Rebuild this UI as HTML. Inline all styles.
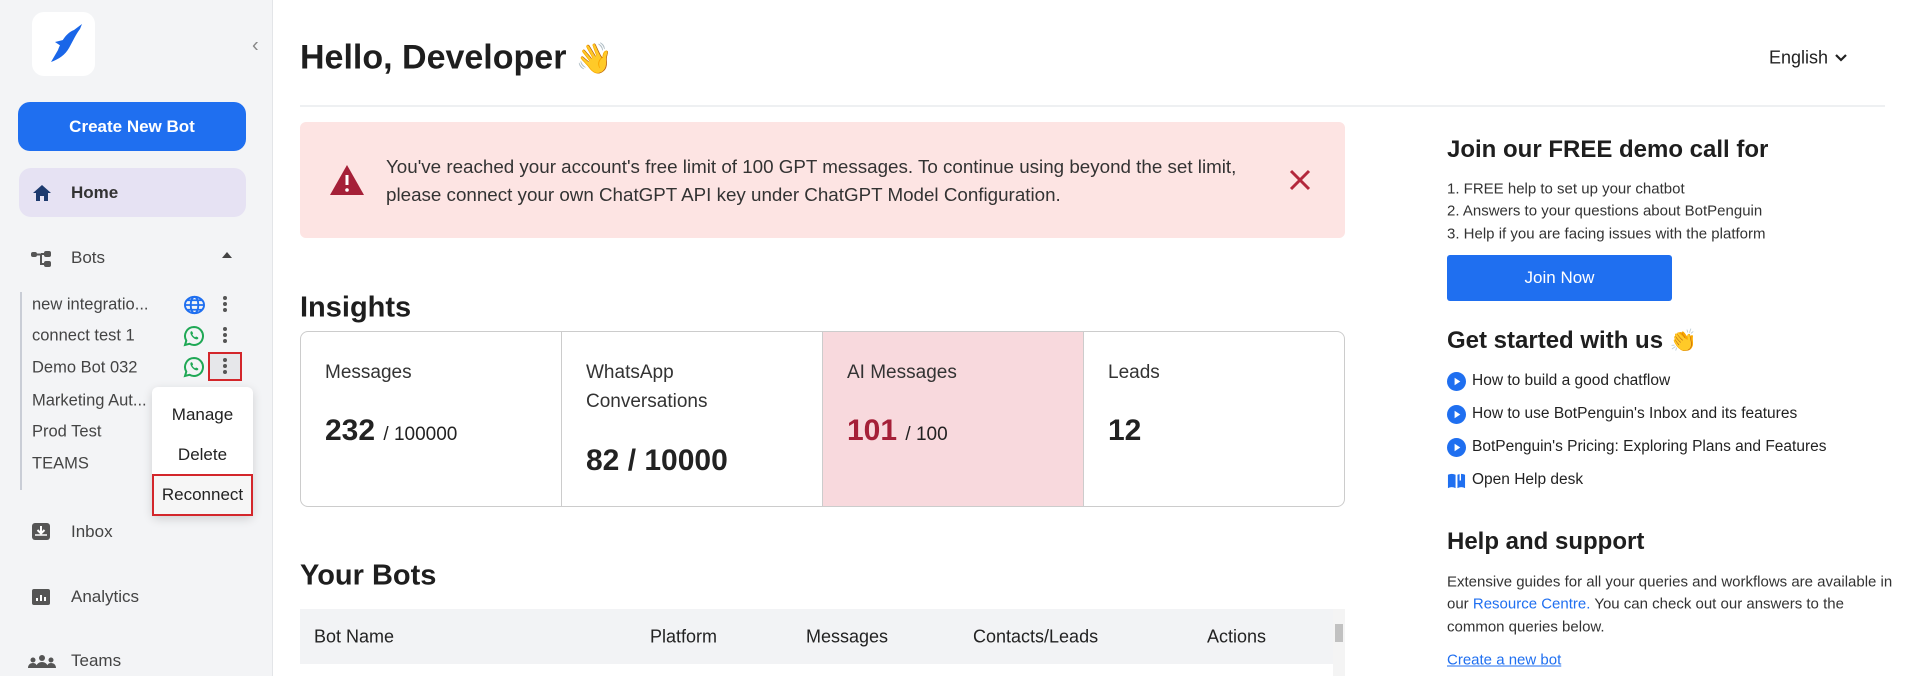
<!DOCTYPE html>
<html><head><meta charset="utf-8"><style>
*{box-sizing:border-box;margin:0;padding:0}
body{width:1910px;height:676px;overflow:hidden;background:#fff;font-family:"Liberation Sans",sans-serif;color:#222;position:relative}
.a{position:absolute;white-space:nowrap}
#sb{position:absolute;left:0;top:0;width:273px;height:676px;background:#f3f4f6;border-right:1px solid #e3e5e8}
.cy{transform:translateY(-50%)}
</style></head><body>
<div id="sb">
 <div class="a" style="left:32px;top:12px;width:63px;height:64px;background:#fff;border-radius:12px"></div>
 <svg class="a" style="left:44px;top:20px" width="44" height="48" viewBox="0 0 44 48"><path d="M38 4 L30 10 C22 13 17 22 14 30 L7 42 C15 39 21 35 25 28 C29 21 32 14 36 9 Z" fill="#1a66e8"/><path d="M11 22 L19 20 L17 26Z" fill="#1a66e8"/></svg>
 <div class="a cy" style="left:252px;top:46px;font-size:20px;color:#888">&#8249;</div>
 <div class="a" style="left:18px;top:102px;width:228px;height:49px;background:#1f6ff0;border-radius:12px;color:#fff;font-weight:bold;font-size:17px;text-align:center;line-height:49px">Create New Bot</div>
 <div class="a" style="left:19px;top:168px;width:227px;height:49px;background:#e6e2f3;border-radius:12px"></div>
 <svg class="a" style="left:32px;top:184px" width="20" height="18" viewBox="0 0 20 18"><path d="M10 1 L1 9 H4 V17 H8 V12 H12 V17 H16 V9 H19Z" fill="#1d3a6e"/></svg>
 <div class="a cy" style="left:71px;top:193px;font-size:17px;font-weight:bold;color:#333">Home</div>
 <svg class="a" style="left:30px;top:250px" width="24" height="18" viewBox="0 0 24 18"><rect x="1" y="2" width="6" height="5" rx="2" fill="#555"/><rect x="14" y="1" width="7" height="6" rx="2" fill="#555"/><rect x="14" y="11" width="7" height="6" rx="2" fill="#555"/><path d="M7 4.5 H11 V14 H14 M11 4 H14" stroke="#555" stroke-width="2" fill="none"/></svg>
 <div class="a cy" style="left:71px;top:258px;font-size:17px;color:#444">Bots</div>
 <div class="a" style="left:222px;top:252px;width:0;height:0;border-left:5px solid transparent;border-right:5px solid transparent;border-bottom:6px solid #444"></div>
 <div class="a" style="left:20px;top:292px;width:2px;height:198px;background:#c9cdd6"></div>
 <div class="a cy" style="left:32px;top:305px;font-size:16.5px;color:#444">new integratio...</div>
 <div class="a cy" style="left:32px;top:336px;font-size:16.5px;color:#444">connect test 1</div>
 <div class="a cy" style="left:32px;top:368px;font-size:16.5px;color:#444">Demo Bot 032</div>
 <div class="a cy" style="left:32px;top:401px;font-size:16.5px;color:#444">Marketing Aut...</div>
 <div class="a cy" style="left:32px;top:432px;font-size:16.5px;color:#444">Prod Test</div>
 <div class="a cy" style="left:32px;top:464px;font-size:16.5px;color:#444">TEAMS</div>
 <div class="a" style="left:32px;top:489px;width:115px;height:3px;overflow:hidden;font-size:16px;color:#444;line-height:0"><span style="display:inline-block;transform:translateY(-10px)">shopping bot 12</span></div>
 <svg class="a" style="left:184px;top:295px" width="21" height="20" viewBox="0 0 22 20"><ellipse cx="11" cy="10" rx="10" ry="8.5" fill="none" stroke="#1f6ff0" stroke-width="2"/><ellipse cx="11" cy="10" rx="4" ry="8.5" fill="none" stroke="#1f6ff0" stroke-width="2"/><path d="M1 10H21M3 5H19M3 15H19" stroke="#1f6ff0" stroke-width="1.8"/></svg>
 <svg class="a" style="left:183px;top:325px" width="22" height="22" viewBox="0 0 22 22"><path d="M11 2a9 9 0 0 0-7.7 13.6L2 20l4.5-1.2A9 9 0 1 0 11 2z" fill="none" stroke="#1fa855" stroke-width="2"/><path d="M7.5 7c.5-1 1.5-1 2 0l.6 1.5-.8 1c.6 1.2 1.6 2.2 2.8 2.8l1-.8 1.5.6c1 .5 1 1.5 0 2-2.5 1.5-8-4-7.1-7.1z" fill="#1fa855"/></svg>
 <svg class="a" style="left:183px;top:356px" width="22" height="22" viewBox="0 0 22 22"><path d="M11 2a9 9 0 0 0-7.7 13.6L2 20l4.5-1.2A9 9 0 1 0 11 2z" fill="none" stroke="#1fa855" stroke-width="2"/><path d="M7.5 7c.5-1 1.5-1 2 0l.6 1.5-.8 1c.6 1.2 1.6 2.2 2.8 2.8l1-.8 1.5.6c1 .5 1 1.5 0 2-2.5 1.5-8-4-7.1-7.1z" fill="#1fa855"/></svg>
 <div class="a" style="left:223px;top:296px;width:4px;font-size:0"><span style="display:block;width:4px;height:4px;border-radius:2px;background:#555;margin-bottom:2px"></span><span style="display:block;width:4px;height:4px;border-radius:2px;background:#555;margin-bottom:2px"></span><span style="display:block;width:4px;height:4px;border-radius:2px;background:#555"></span></div>
 <div class="a" style="left:223px;top:327px;width:4px;font-size:0"><span style="display:block;width:4px;height:4px;border-radius:2px;background:#555;margin-bottom:2px"></span><span style="display:block;width:4px;height:4px;border-radius:2px;background:#555;margin-bottom:2px"></span><span style="display:block;width:4px;height:4px;border-radius:2px;background:#555"></span></div>
 <div class="a" style="left:208px;top:352px;width:34px;height:29px;border:2px solid #d3262b;background:#e6e7ea"></div>
 <div class="a" style="left:223px;top:358px;width:4px;font-size:0"><span style="display:block;width:4px;height:4px;border-radius:2px;background:#555;margin-bottom:2px"></span><span style="display:block;width:4px;height:4px;border-radius:2px;background:#555;margin-bottom:2px"></span><span style="display:block;width:4px;height:4px;border-radius:2px;background:#555"></span></div>
 <div class="a" style="left:152px;top:387px;width:101px;height:129px;background:#fff;border-radius:6px;box-shadow:0 3px 10px rgba(0,0,0,.15)"></div>
 <div class="a cy" style="left:152px;width:101px;text-align:center;top:415px;font-size:17px;color:#222">Manage</div>
 <div class="a cy" style="left:152px;width:101px;text-align:center;top:455px;font-size:17px;color:#222">Delete</div>
 <div class="a" style="left:152px;top:474px;width:101px;height:42px;border:2px solid #d3262b;background:#f6f6f6;text-align:center;line-height:38px;font-size:17px;color:#222">Reconnect</div>
 <svg class="a" style="left:31px;top:522px" width="20" height="19" viewBox="0 0 20 19"><rect x="1" y="1" width="18" height="17" rx="3" fill="#555"/><path d="M10 4V11M6.5 8L10 11.5 13.5 8" stroke="#fff" stroke-width="2" fill="none"/><path d="M4 13H16" stroke="#fff" stroke-width="1.5"/></svg>
 <div class="a cy" style="left:71px;top:532px;font-size:17px;color:#444">Inbox</div>
 <svg class="a" style="left:31px;top:588px" width="20" height="18" viewBox="0 0 20 18"><rect x="1" y="1" width="18" height="16" rx="2" fill="#555"/><path d="M6 13V10M10 13V7M14 13V9" stroke="#fff" stroke-width="2"/></svg>
 <div class="a cy" style="left:71px;top:597px;font-size:17px;color:#444">Analytics</div>
 <svg class="a" style="left:28px;top:654px" width="28" height="14" viewBox="0 0 28 14"><circle cx="14" cy="4" r="3" fill="#555"/><circle cx="5" cy="6" r="2.5" fill="#555"/><circle cx="23" cy="6" r="2.5" fill="#555"/><path d="M8 14c0-4 3-6 6-6s6 2 6 6z M0 14c0-3 2-5 5-5s4 2 4 5z M19 14c0-3 1-5 4-5s5 2 5 5z" fill="#555"/></svg>
 <div class="a cy" style="left:71px;top:661px;font-size:17px;color:#444">Teams</div>
</div>

<div class="a cy" style="left:300px;top:58px;font-size:34px;font-weight:bold;color:#1e1e1e">Hello, Developer <span style="font-size:30px">👋</span></div>
<div class="a cy" style="left:1769px;top:58px;font-size:18px;color:#222">English</div>
<svg class="a" style="left:1834px;top:53px" width="14" height="10" viewBox="0 0 14 10"><path d="M2 2L7 7L12 2" stroke="#222" stroke-width="2.2" fill="none"/></svg>
<div class="a" style="left:300px;top:105px;width:1585px;height:2px;background:#eef0f2"></div>

<div class="a" style="left:300px;top:122px;width:1045px;height:116px;background:#fde4e3;border-radius:6px"></div>
<svg class="a" style="left:329px;top:164px" width="36" height="32" viewBox="0 0 36 32"><path d="M18 1L35 31H1Z" fill="#a52038"/><path d="M18 11V21" stroke="#fff" stroke-width="3"/><circle cx="18" cy="26" r="1.8" fill="#fff"/></svg>
<div class="a cy" style="left:386px;top:167px;font-size:18.8px;color:#333">You've reached your account's free limit of 100 GPT messages. To continue using beyond the set limit,</div>
<div class="a cy" style="left:386px;top:195px;font-size:18.8px;color:#333">please connect your own ChatGPT API key under ChatGPT Model Configuration.</div>
<svg class="a" style="left:1289px;top:169px" width="22" height="22" viewBox="0 0 22 22"><path d="M2 2L20 20M20 2L2 20" stroke="#b3273b" stroke-width="3"/></svg>

<div class="a cy" style="left:300px;top:308px;font-size:29px;font-weight:bold;color:#1e1e1e">Insights</div>
<div class="a" style="left:300px;top:331px;width:1045px;height:176px;border:1px solid #ccc;border-radius:8px;overflow:hidden">
 <div class="a" style="left:522px;top:0;width:261px;height:176px;background:#f8d9dd"></div>
 <div class="a" style="left:260px;top:0;width:1px;height:176px;background:#ccc"></div>
 <div class="a" style="left:521px;top:0;width:1px;height:176px;background:#ccc"></div>
 <div class="a" style="left:782px;top:0;width:1px;height:176px;background:#ccc"></div>
</div>
<div class="a cy" style="left:325px;top:373px;font-size:19px;color:#333">Messages</div>
<div class="a cy" style="left:325px;top:431px;font-size:30px;font-weight:bold;color:#222">232 <span style="font-size:19px;font-weight:normal">/ 100000</span></div>
<div class="a cy" style="left:586px;top:373px;font-size:19px;color:#333">WhatsApp</div>
<div class="a cy" style="left:586px;top:402px;font-size:19px;color:#333">Conversations</div>
<div class="a cy" style="left:586px;top:461px;font-size:30px;font-weight:bold;color:#222">82 / 10000</div>
<div class="a cy" style="left:847px;top:373px;font-size:19px;color:#333">AI Messages</div>
<div class="a cy" style="left:847px;top:431px;font-size:30px;font-weight:bold;color:#a52038">101 <span style="font-size:19px;font-weight:normal;color:#222">/ 100</span></div>
<div class="a cy" style="left:1108px;top:373px;font-size:19px;color:#333">Leads</div>
<div class="a cy" style="left:1108px;top:431px;font-size:30px;font-weight:bold;color:#222">12</div>

<div class="a cy" style="left:300px;top:576px;font-size:29px;font-weight:bold;color:#1e1e1e">Your Bots</div>
<div class="a" style="left:300px;top:609px;width:1033px;height:55px;background:#f2f3f5"></div>
<div class="a" style="left:1333px;top:609px;width:12px;height:67px;background:#f4f4f4"></div>
<div class="a" style="left:1335px;top:624px;width:8px;height:18px;background:#c1c1c1"></div>
<div class="a cy" style="left:314px;top:637px;font-size:18px;color:#222">Bot Name</div>
<div class="a cy" style="left:650px;top:637px;font-size:18px;color:#222">Platform</div>
<div class="a cy" style="left:806px;top:637px;font-size:18px;color:#222">Messages</div>
<div class="a cy" style="left:973px;top:637px;font-size:18px;color:#222">Contacts/Leads</div>
<div class="a cy" style="left:1207px;top:637px;font-size:18px;color:#222">Actions</div>

<div class="a cy" style="left:1447px;top:150px;font-size:24px;font-weight:bold;color:#1e1e1e">Join our FREE demo call for</div>
<div class="a cy" style="left:1447px;top:189px;font-size:15px;color:#333">1. FREE help to set up your chatbot</div>
<div class="a cy" style="left:1447px;top:211px;font-size:15px;color:#333">2. Answers to your questions about BotPenguin</div>
<div class="a cy" style="left:1447px;top:234px;font-size:15px;color:#333">3. Help if you are facing issues with the platform</div>
<div class="a" style="left:1447px;top:255px;width:225px;height:46px;background:#1f6ff0;border-radius:3px;color:#fff;font-size:17px;text-align:center;line-height:46px">Join Now</div>
<div class="a cy" style="left:1447px;top:341px;font-size:24px;font-weight:bold;color:#1e1e1e">Get started with us <span style="font-size:22px">👏</span></div>
<svg class="a" style="left:1447px;top:372px" width="19" height="19" viewBox="0 0 20 20"><circle cx="10" cy="10" r="10" fill="#1f6ff0"/><path d="M8 6L14 10L8 14Z" fill="#fff"/></svg>
<div class="a cy" style="left:1472px;top:381px;font-size:15.5px;color:#222">How to build a good chatflow</div>
<svg class="a" style="left:1447px;top:405px" width="19" height="19" viewBox="0 0 20 20"><circle cx="10" cy="10" r="10" fill="#1f6ff0"/><path d="M8 6L14 10L8 14Z" fill="#fff"/></svg>
<div class="a cy" style="left:1472px;top:414px;font-size:15.5px;color:#222">How to use BotPenguin's Inbox and its features</div>
<svg class="a" style="left:1447px;top:438px" width="19" height="19" viewBox="0 0 20 20"><circle cx="10" cy="10" r="10" fill="#1f6ff0"/><path d="M8 6L14 10L8 14Z" fill="#fff"/></svg>
<div class="a cy" style="left:1472px;top:447px;font-size:15.5px;color:#222">BotPenguin's Pricing: Exploring Plans and Features</div>
<svg class="a" style="left:1447px;top:471px" width="19" height="19" viewBox="0 0 20 20"><path d="M1 4Q5 2 9 4V18Q5 16 1 18Z M11 4Q15 2 19 4V18Q15 16 11 18Z" fill="#1f6ff0"/><path d="M14 2V10" stroke="#fff" stroke-width="1.5"/></svg>
<div class="a cy" style="left:1472px;top:480px;font-size:15.5px;color:#222">Open Help desk</div>
<div class="a cy" style="left:1447px;top:542px;font-size:24px;font-weight:bold;color:#1e1e1e">Help and support</div>
<div class="a cy" style="left:1447px;top:582px;font-size:15px;color:#333">Extensive guides for all your queries and workflows are available in</div>
<div class="a cy" style="left:1447px;top:604px;font-size:15px;color:#333">our <span style="color:#1f6ff0">Resource Centre.</span> You can check out our answers to the</div>
<div class="a cy" style="left:1447px;top:627px;font-size:15px;color:#333">common queries below.</div>
<div class="a cy" style="left:1447px;top:660px;font-size:15px;color:#1f6ff0;text-decoration:underline">Create a new bot</div>
</body></html>
